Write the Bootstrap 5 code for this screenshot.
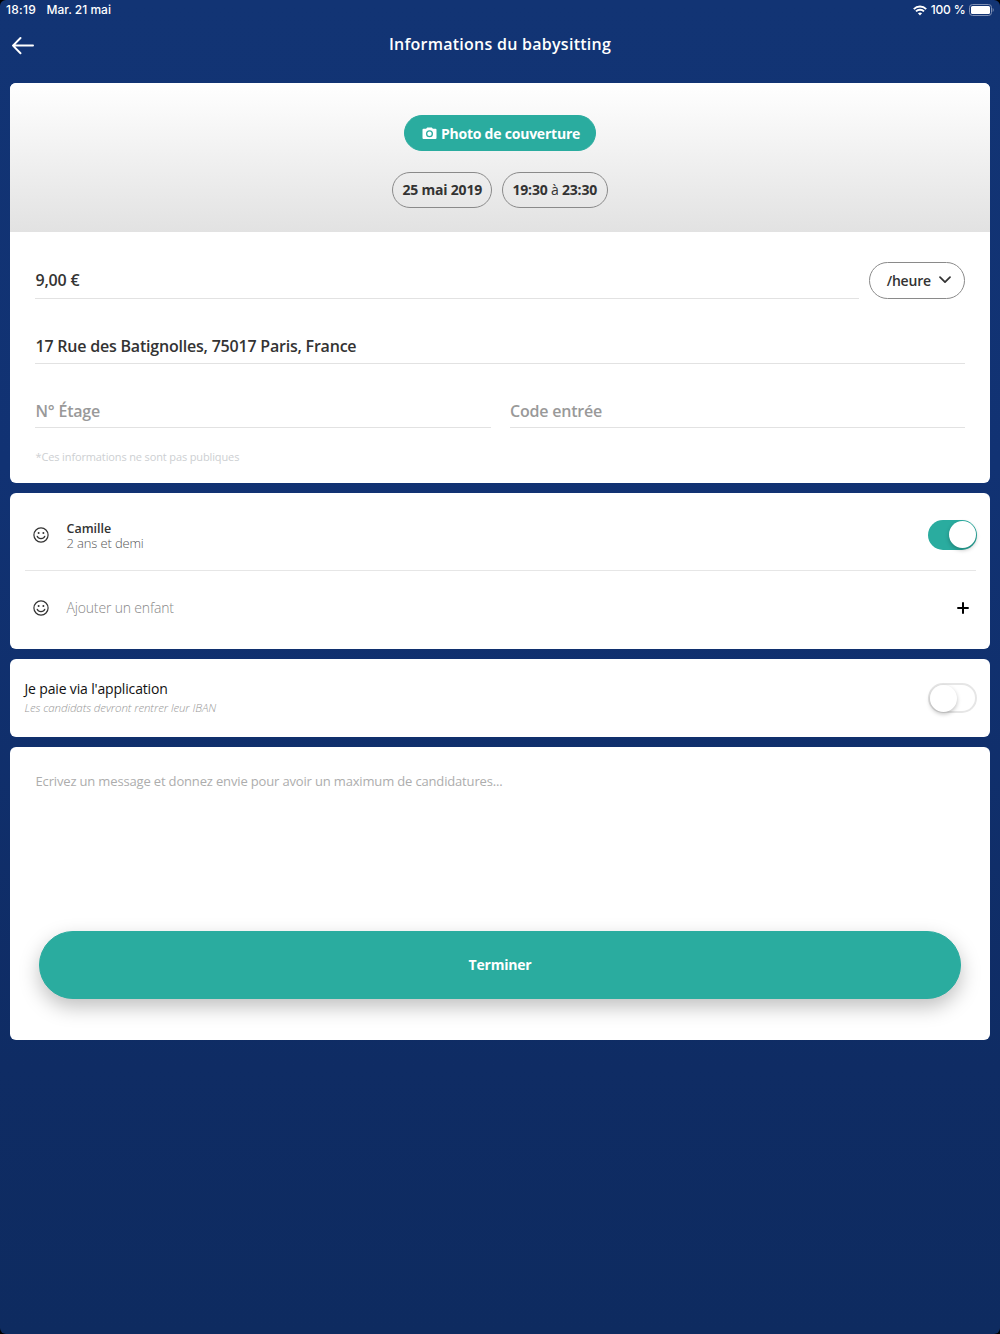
<!DOCTYPE html>
<html lang="fr">
<head>
<meta charset="utf-8">
<meta name="viewport" content="width=device-width, initial-scale=1">
<title>Informations du babysitting</title>
<link href="https://cdn.jsdelivr.net/npm/bootstrap@5.3.0/dist/css/bootstrap.min.css" rel="stylesheet">
<style>
  :root { --teal: #2aac9f; }
  html { background: #000; }
  body { font-family: "Open Sans", sans-serif; background: #000; color: #333; }
  .screen { height: 1334px; border-radius: 6px; overflow: hidden; background: linear-gradient(#123474 0, #113273 35%, #0f2c64 80%, #0e2b60 100%); }
  .status-bar { height: 20px; padding: 0 6px; font: 500 12px/20px Inter, sans-serif; letter-spacing: 0; }
  .status-left { gap: 10.5px; } .status-left span:first-child { letter-spacing: .25px; }
  .status-right { gap: 3.5px; } .status-right span { letter-spacing: -.15px; }
  .title-bar { height: 63px; padding: 0 10.5px; }
  .title-bar h1 { font-size: 16px; line-height: 22px; font-weight: 600; letter-spacing: .26px; margin-top: 13px; }
  .side { width: 24px; }
  .side svg { margin-top: 16px; }
  .stack { padding: .3px 10px 0; gap: 9.8px; }
  .panel { border: 0; border-radius: 6px; }
  .info-panel { height: 400.2px; }
  .cover { height: 148.3px; padding-top: 32px; background: linear-gradient(#fff, #e2e2e2); border-radius: 6px 6px 0 0; }
  .btn-teal { --bs-btn-color: #fff; --bs-btn-bg: var(--teal); --bs-btn-border-color: var(--teal); --bs-btn-hover-bg: #25998d; --bs-btn-hover-color: #fff; font-weight: 700; letter-spacing: -.22px; }
  .photo-btn { height: 35.4px; width: 191.5px; font-size: 14px; line-height: 20px; padding: 2px 0 0 2px; }
  .slots { gap: 9.5px; margin-top: 21.3px; }
  .pill { border: 1px solid #8a8a8a; border-radius: 30px; height: 35.6px; font-size: 14px; font-weight: 700; white-space: nowrap; letter-spacing: -.2px; }
  .date-pill { width: 100px; } .time-pill { width: 106px; }
  .unit-pill { width: 96.5px; height: 37px; font-weight: 600; padding-left: 4px; }
  .fields { padding: 30px 25px 0; }
  .rate-row { gap: 9.5px; }
  .field { border-bottom: 1px solid #e2e2e2; font-size: 16px; line-height: 22px; font-weight: 600; padding-left: .5px; white-space: nowrap; letter-spacing: -.21px; }
  .rate { height: 37px; padding-top: 7px; }
  .address { height: 38px; margin-top: 27.6px; padding-top: 8.4px; }
  .entry { height: 37px; padding-top: 9.2px; color: #999; }
  .entries { margin-top: 26.8px; --bs-gutter-x: 19px; }
  .note { font-size: 11px; line-height: 16px; color: #cdcfd2; margin: 20.6px 0 0 .5px; letter-spacing: -.13px; }
  .children-panel { height: 156.2px; padding: 0 14px 0 14.5px; }
  .child-row { height: 78px; padding-left: 8px; border-bottom: 1px solid #e6e6e6; padding-top: 6px; }
  .child-row + .child-row { border: 0; height: 74px; padding-top: 0; }
  .child-label { margin-left: 18px; font-size: 13px; line-height: 16px; padding-top: 1px; letter-spacing: -.14px; color: #555; }
  .child-name { font-size: 12.5px; line-height: 17px; font-weight: 600; letter-spacing: 0; color: #333; }
  .child-age { line-height: 15px; margin-top: -.5px; }
  .add-label { font-size: 14px; padding-top: 0; letter-spacing: -.17px; color: #888; }
  .thin { font-weight: 300; }
  .plus { margin-right: 7.5px; }
  .switch { width: 49.5px; height: 30.5px; border-radius: 16px; padding: 1.8px; }
  .switch::after { content: ""; display: block; width: 27px; height: 27px; border-radius: 50%; background: #fff; box-shadow: 0 2px 4px rgba(0,0,0,.25); }
  .switch-on { background: var(--teal); margin-right: -1.4px; } .switch-on::after { margin-left: 19.3px; }
  .switch-off { border: 2px solid #e6e6e6; padding: 0; height: 30px; } .switch-off::after { width: 27px; height: 27px; }
  .pay-panel { height: 78px; padding: 0 12.6px 0 14.5px; }
  .pay-text { margin-top: -2px; }
  .pay-title { color: #111; font-size: 14px; line-height: 20px; letter-spacing: -.16px; }
  .pay-sub { font-size: 11.5px; line-height: 17px; color: #999; letter-spacing: -.11px; }
  .message-panel { height: 292.7px; padding: 24px 29px 0; }
  .message { height: 159.6px; font-size: 13px; line-height: 20px; color: #adadad; margin-left: -3.5px; letter-spacing: -.16px; }
  .done { height: 68.5px; font-size: 14px; box-shadow: 0 8px 20px rgba(0,0,0,.25); }
</style>
</head>
<body>
<div class="screen d-flex flex-column">
  <div class="status-bar d-flex justify-content-between text-white">
    <div class="status-left d-flex"><span>18:19</span><span>Mar. 21 mai</span></div>
    <div class="status-right d-flex align-items-center">
      <svg width="14" height="11" viewBox="0 0 14 11" fill="none" stroke="#fff" stroke-width="1.9"><path d="M.8 4.1C4.2.6 9.8.6 13.2 4.1M3 6.4c2.2-2.3 5.800-2.300 8 0"/><path d="M4.900 8.200c1.200-1.100 3-1.100 4.200 0L7 10.500Z" fill="#fff" stroke="none"/></svg>
      <span>100 %</span>
      <svg width="25" height="12" viewBox="0 0 25 12"><rect x=".5" y=".5" width="22" height="11" rx="3" fill="none" stroke="#8191b4"/><rect x="2" y="2" width="19" height="8" rx="1.500" fill="#fff"/><path d="M23.700 4v4c1.300-.5 1.300-3.500 0-4" fill="#8191b4"/></svg>
    </div>
  </div>
  <header class="title-bar d-flex justify-content-between text-white">
    <div class="side"><svg width="24" height="20" viewBox="0 0 24 20" fill="none" stroke="#fff" stroke-width="2" stroke-linecap="round" stroke-linejoin="round"><path d="M22 9.600H2M9.500 2 2 9.600l7.500 7.600"/></svg></div>
    <h1>Informations du babysitting</h1>
    <div class="side"></div>
  </header>
  <main class="stack d-flex flex-column">
    <section class="card panel info-panel">
      <div class="cover d-flex flex-column align-items-center">
        <button class="btn btn-teal rounded-pill photo-btn d-flex align-items-center justify-content-center">
          <svg class="me-1" width="15" height="13" viewBox="0 0 15 13"><path fill="#fff" fill-rule="evenodd" d="M1.500 1.700h2.600L5.200.4h4.600l1.100 1.300h2.600q1 0 1 1v8.300q0 1-1 1h-12q-1 0-1-1V2.700q0-1 1-1ZM7.500 3.200a3.500 3.500 0 1 0 0 7 3.500 3.500 0 0 0 0-7Z"/><circle cx="7.500" cy="6.700" r="2.200" fill="#fff"/></svg>
          <span>Photo de couverture</span>
        </button>
        <div class="slots d-flex">
          <div class="pill date-pill d-flex align-items-center justify-content-center">25 mai 2019</div>
          <div class="pill time-pill d-flex align-items-center justify-content-center"><span>19:30 <span class="fw-normal">à</span> 23:30</span></div>
        </div>
      </div>
      <div class="fields">
        <div class="rate-row d-flex">
          <div class="field rate flex-grow-1">9,00 €</div>
          <div class="pill unit-pill d-flex align-items-center justify-content-center">/heure
            <svg class="ms-2" width="12" height="8" viewBox="0 0 12 8" fill="none" stroke="#333" stroke-width="1.700" stroke-linecap="round" stroke-linejoin="round"><path d="m1 1.200 5 5 5-5"/></svg>
          </div>
        </div>
        <div class="field address">17 Rue des Batignolles, 75017 Paris, France</div>
        <div class="row entries">
          <div class="col-6"><div class="field entry">N° Étage</div></div>
          <div class="col-6"><div class="field entry">Code entrée</div></div>
        </div>
        <p class="note">*Ces informations ne sont pas publiques</p>
      </div>
    </section>
    <section class="card panel children-panel">
      <div class="child-row d-flex align-items-center">
        <svg width="16" height="16" viewBox="0 0 16 16" fill="none" stroke="#333" stroke-width="1.200"><circle cx="8" cy="8" r="7.100"/><path d="M4.200 9.300c1.300 3.200 6.300 3.200 7.600 0" stroke-linecap="round"/><g fill="#333" stroke="none"><circle cx="5.600" cy="6.100" r="1"/><circle cx="10.400" cy="6.100" r="1"/></g></svg>
        <div class="child-label flex-grow-1"><div class="child-name">Camille</div><div class="child-age thin">2 ans et demi</div></div>
        <div class="switch switch-on"></div>
      </div>
      <div class="child-row d-flex align-items-center">
        <svg width="16" height="16" viewBox="0 0 16 16" fill="none" stroke="#333" stroke-width="1.200"><circle cx="8" cy="8" r="7.100"/><path d="M4.200 9.300c1.300 3.200 6.300 3.200 7.600 0" stroke-linecap="round"/><g fill="#333" stroke="none"><circle cx="5.600" cy="6.100" r="1"/><circle cx="10.400" cy="6.100" r="1"/></g></svg>
        <div class="child-label add-label thin flex-grow-1">Ajouter un enfant</div>
        <svg class="plus" width="12" height="12" viewBox="0 0 12 12" stroke="#000" stroke-width="2"><path d="M6 .3v11.400M.3 6h11.400"/></svg>
      </div>
    </section>
    <section class="card panel pay-panel flex-row align-items-center justify-content-between">
      <div class="pay-text"><div class="pay-title">Je paie via l'application</div><div class="pay-sub thin fst-italic">Les candidats devront rentrer leur IBAN</div></div>
      <div class="switch switch-off"></div>
    </section>
    <section class="card panel message-panel">
      <div class="message">Ecrivez un message et donnez envie pour avoir un maximum de candidatures...</div>
      <button class="btn btn-teal rounded-pill w-100 done">Terminer</button>
    </section>
  </main>
</div>
<script src="https://cdn.jsdelivr.net/npm/bootstrap@5.3.0/dist/js/bootstrap.bundle.min.js"></script>
</body>
</html>
